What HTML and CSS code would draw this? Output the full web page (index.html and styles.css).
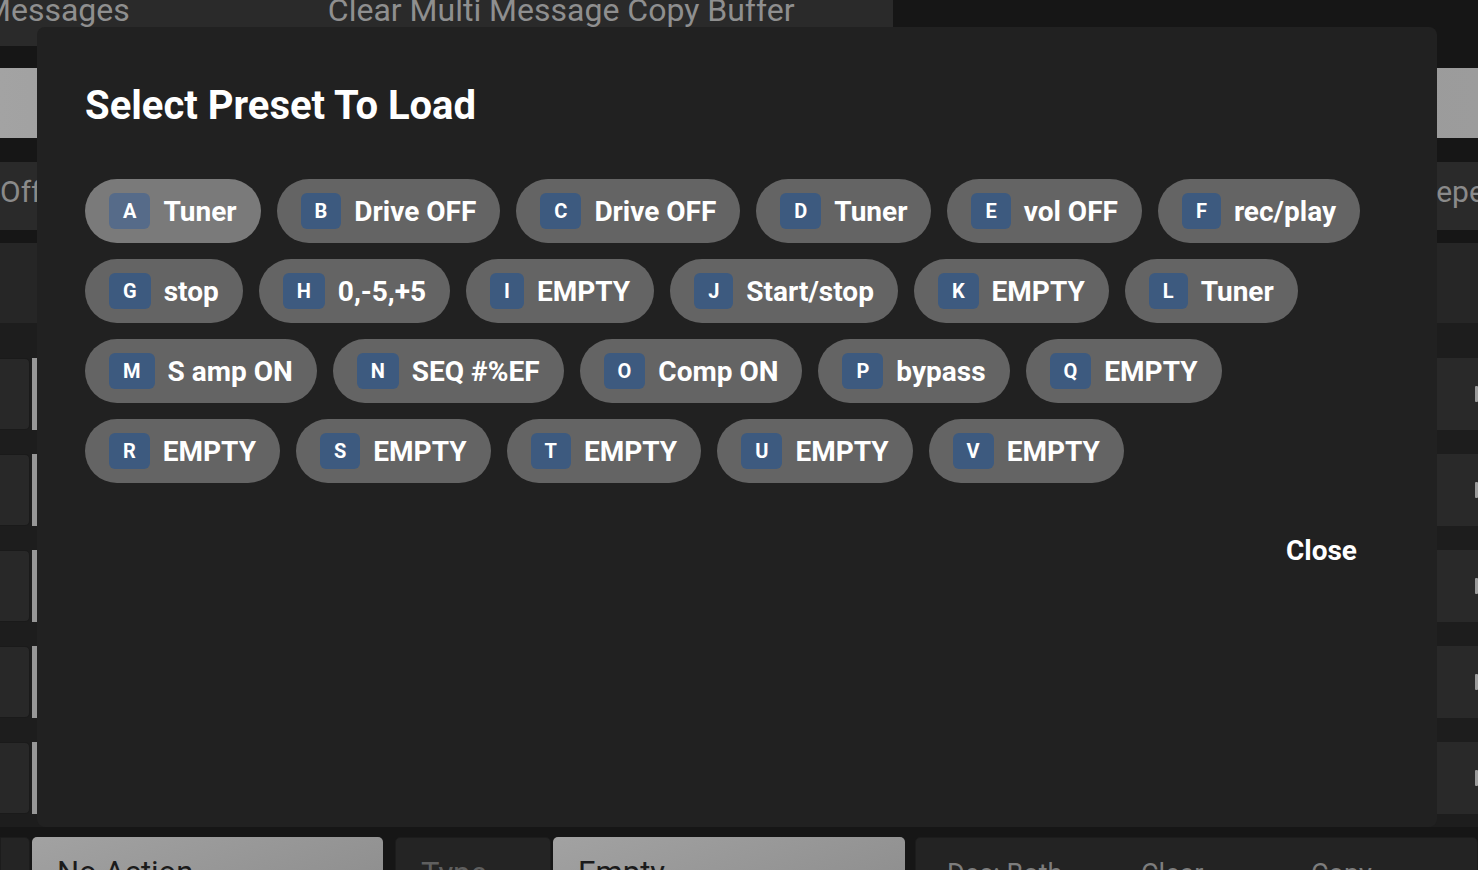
FILE: index.html
```html
<!DOCTYPE html>
<html lang="en">
<head>
    <meta charset="UTF-8">
    <meta name="viewport" content="width=device-width, initial-scale=1.0">
    <title>Select Preset To Load</title>
    <link rel="stylesheet" href="styles.css">
</head>
<body>
    <div class="pagina">
        <div class="abas">
            <div class="aba-faixa">
                <span class="aba-texto primeiro">Messages</span>
                <span class="aba-texto">Clear Multi Message Copy Buffer</span>
            </div>
        </div>
        <div class="barra"></div>
        <div class="secao">
            <span class="secao-texto">Off</span>
            <span class="secao-texto direita">Repeat</span>
        </div>
        <div class="bloco"></div>
        <div class="linhas">
            <div class="linha"><div class="celula"></div><div class="tira"></div><div class="meio"></div><div class="celula-dir"><span class="marca"></span></div></div>
            <div class="linha"><div class="celula"></div><div class="tira"></div><div class="meio"></div><div class="celula-dir"><span class="marca"></span></div></div>
            <div class="linha"><div class="celula"></div><div class="tira"></div><div class="meio"></div><div class="celula-dir"><span class="marca"></span></div></div>
            <div class="linha"><div class="celula"></div><div class="tira"></div><div class="meio"></div><div class="celula-dir"><span class="marca"></span></div></div>
            <div class="linha"><div class="celula"></div><div class="tira"></div><div class="meio"></div><div class="celula-dir"><span class="marca"></span></div></div>
        </div>
        <div class="rodape">
            <div class="rod-celula escura pequena"></div>
            <div class="rod-celula clara acao">No Action</div>
            <div class="rod-celula escura tipo">Type</div>
            <div class="rod-celula clara vazio">Empty</div>
            <div class="rod-celula escura painel">
                <span>Dec: Both</span>
                <span>Clear</span>
                <span>Copy</span>
            </div>
        </div>
    </div>

    <div class="modal">
        <h1 class="titulo">Select Preset To Load</h1>
        <div class="presets">
            <button class="preset ativo"><span class="letra">A</span>Tuner</button>
            <button class="preset"><span class="letra">B</span>Drive OFF</button>
            <button class="preset"><span class="letra">C</span>Drive OFF</button>
            <button class="preset"><span class="letra">D</span>Tuner</button>
            <button class="preset"><span class="letra">E</span>vol OFF</button>
            <button class="preset"><span class="letra">F</span>rec/play</button>
            <button class="preset"><span class="letra">G</span>stop</button>
            <button class="preset"><span class="letra">H</span>0,-5,+5</button>
            <button class="preset"><span class="letra">I</span>EMPTY</button>
            <button class="preset"><span class="letra">J</span>Start/stop</button>
            <button class="preset"><span class="letra">K</span>EMPTY</button>
            <button class="preset"><span class="letra">L</span>Tuner</button>
            <button class="preset"><span class="letra">M</span>S amp ON</button>
            <button class="preset"><span class="letra">N</span>SEQ #%EF</button>
            <button class="preset"><span class="letra">O</span>Comp ON</button>
            <button class="preset"><span class="letra">P</span>bypass</button>
            <button class="preset"><span class="letra">Q</span>EMPTY</button>
            <button class="preset"><span class="letra">R</span>EMPTY</button>
            <button class="preset"><span class="letra">S</span>EMPTY</button>
            <button class="preset"><span class="letra">T</span>EMPTY</button>
            <button class="preset"><span class="letra">U</span>EMPTY</button>
            <button class="preset"><span class="letra">V</span>EMPTY</button>
        </div>
        <div class="acoes">
            <button class="fechar">Close</button>
        </div>
    </div>
</body>
</html>
```

FILE: styles.css
```css
* {
    margin: 0;
    padding: 0;
    box-sizing: border-box;
}

body {
    width: 1478px;
    height: 870px;
    overflow: hidden;
    background-color: #161616;
    font-family: Roboto, "Liberation Sans", sans-serif;
}

/* pagina de fundo (escurecida pelo modal) */

.pagina {
    display: flex;
    flex-direction: column;
}

.abas {
    display: flex;
    height: 46px;
}

.aba-faixa {
    display: flex;
    align-items: flex-start;
    width: 893px;
    background-color: #2a2a2a;
    overflow: hidden;
    gap: 198px;
}

.aba-texto {
    font-size: 32px;
    line-height: 20px;
    color: #8f8f8f;
    white-space: nowrap;
}

.primeiro {
    margin-left: -17px;
}

.barra {
    margin-top: 22px;
    height: 70px;
    background: linear-gradient(90deg, #a3a3a3, #8f8f8f 40%, #9c9c9c);
}

.secao {
    display: flex;
    justify-content: space-between;
    align-items: center;
    margin-top: 24px;
    height: 68px;
    background-color: #2a2a2a;
    overflow: hidden;
}

.secao-texto {
    font-size: 30px;
    color: #8a8a8a;
    margin-top: -10px;
}

.direita {
    margin-right: -33px;
}

.bloco {
    margin-top: 13px;
    height: 80px;
    background-color: #262626;
}

.linhas {
    display: flex;
    flex-direction: column;
    gap: 24px;
    padding: 35px 0 13px;
    background-color: #1d1d1d;
}

.linha {
    display: flex;
    height: 72px;
}

.celula {
    width: 30px;
    background-color: #282828;
    border: 1px solid #1a1a1a;
    border-left: none;
    border-radius: 0 5px 5px 0;
}

.tira {
    width: 5px;
    margin-left: 2px;
    background-color: #979797;
}

.meio {
    flex: 1;
}

.celula-dir {
    display: flex;
    justify-content: flex-end;
    align-items: center;
    width: 120px;
    background-color: #292929;
}

.marca {
    width: 3px;
    height: 16px;
    background-color: #9a9a9a;
    border-radius: 1px;
}

.rodape {
    display: flex;
    margin-top: 10px;
    height: 60px;
}

.rod-celula {
    border-radius: 5px 5px 0 0;
    font-size: 31px;
    padding: 17px 0 0 25px;
    white-space: nowrap;
    overflow: hidden;
}

.escura {
    background-color: #242424;
    color: #5f5f5f;
    border: 1px solid #1c1c1c;
}

.clara {
    background: linear-gradient(160deg, #a2a2a2, #8d8d8d);
    color: #1b1b1b;
}

.pequena {
    width: 30px;
    margin-right: 2px;
    border-radius: 0 5px 0 0;
}

.acao {
    width: 351px;
    margin-right: 12px;
}

.tipo {
    width: 156px;
    margin-right: 2px;
}

.vazio {
    width: 352px;
    margin-right: 10px;
}

.painel {
    display: grid;
    grid-template-columns: 194px 170px 1fr;
    flex: 1;
    padding-left: 31px;
    font-size: 27px;
    padding-top: 20px;
    color: #7d7d7d;
    background-color: #232323;
}

/* modal */

.modal {
    position: fixed;
    left: 37px;
    top: 27px;
    width: 1400px;
    height: 800px;
    display: flex;
    flex-direction: column;
    padding: 56px 48px 0;
    background-color: #212121;
    border-radius: 8px;
}

.titulo {
    font-size: 40px;
    line-height: 46px;
    font-weight: 700;
    color: #ffffff;
}

.presets {
    display: flex;
    flex-wrap: wrap;
    gap: 16px;
    margin-top: 50px;
}

.preset {
    display: flex;
    align-items: center;
    gap: 13px;
    height: 64px;
    padding: 0 24px;
    border: none;
    border-radius: 32px;
    background-color: #646464;
    color: #ffffff;
    font-family: Roboto, "Liberation Sans", sans-serif;
    font-size: 28px;
    font-weight: 700;
    cursor: pointer;
}

.letra {
    display: flex;
    justify-content: center;
    align-items: center;
    height: 36px;
    padding: 0 14px;
    border-radius: 6px;
    background-color: #3d5a7f;
    font-size: 20px;
    font-weight: 700;
}

.ativo {
    background-color: #7a7a7a;
}

.ativo .letra {
    background-color: #566b89;
}

.acoes {
    display: flex;
    justify-content: flex-end;
    margin-top: 40px;
}

.fechar {
    padding: 12px 32px;
    border: none;
    background: none;
    color: #ffffff;
    font-family: Roboto, "Liberation Sans", sans-serif;
    font-size: 28px;
    line-height: 32px;
    font-weight: 700;
    cursor: pointer;
}
```
